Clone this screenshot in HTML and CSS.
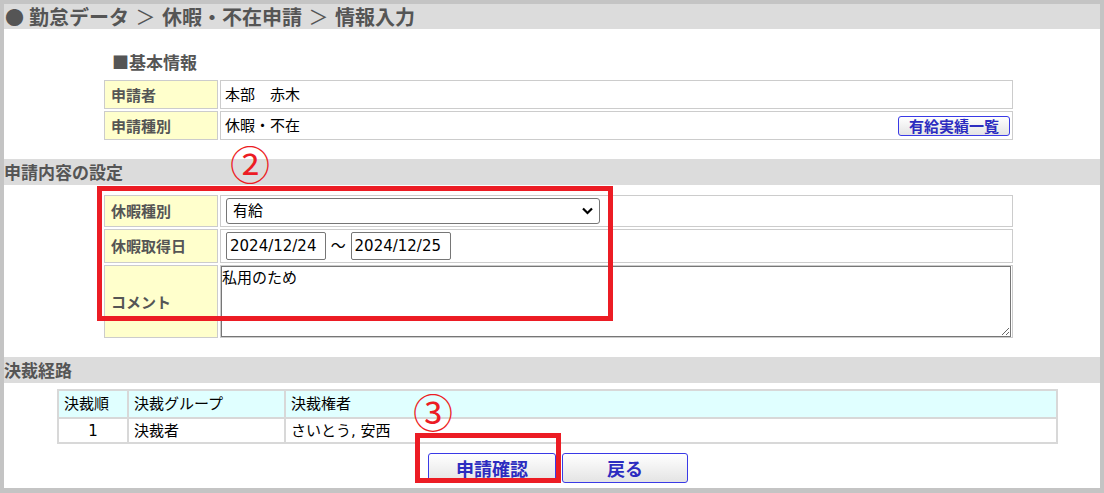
FILE: index.html
```html
<!DOCTYPE html>
<html lang="ja">
<head>
    <meta charset="UTF-8">
    <title>休暇・不在申請 情報入力</title>
    <link rel="stylesheet" href="styles.css">
</head>
<body>
<div class="frame">
    <div class="page-title"><span class="bullet">●</span>勤怠データ<span class="sep">＞</span>休暇・不在申請<span class="sep">＞</span>情報入力</div>

    <div class="sub-title">■基本情報</div>
    <table class="form-table">
        <tr class="row-basic">
            <td class="label">申請者</td>
            <td class="value">本部　赤木</td>
        </tr>
        <tr class="row-basic">
            <td class="label">申請種別</td>
            <td class="value">
                <div class="value-line">
                    <span>休暇・不在</span>
                    <button class="btn btn-small">有給実績一覧</button>
                </div>
            </td>
        </tr>
    </table>

    <div class="section-bar">申請内容の設定</div>
    <table class="form-table">
        <tr class="row-select">
            <td class="label">休暇種別</td>
            <td class="value value-input">
                <span class="select-wrap">
                    <select class="select">
                        <option>有給</option>
                        <option>特別休暇</option>
                        <option>欠勤</option>
                    </select>
                    <svg class="select-arrow" width="11" height="8" viewBox="0 0 11 8"><polyline points="1,1.5 5.5,6 10,1.5" fill="none" stroke="#000" stroke-width="2.2"/></svg>
                </span>
            </td>
        </tr>
        <tr class="row-date">
            <td class="label">休暇取得日</td>
            <td class="value value-input">
                <input class="date" type="text" value="2024/12/24"> ～ <input class="date" type="text" value="2024/12/25">
            </td>
        </tr>
        <tr class="row-comment">
            <td class="label">コメント</td>
            <td class="value value-area"><textarea class="comment">私用のため</textarea></td>
        </tr>
    </table>

    <div class="section-bar">決裁経路</div>
    <table class="route-table">
        <tr class="route-head">
            <td class="col-order">決裁順</td>
            <td class="col-group">決裁グループ</td>
            <td>決裁権者</td>
        </tr>
        <tr class="route-row">
            <td class="col-order center">1</td>
            <td>決裁者</td>
            <td>さいとう, 安西</td>
        </tr>
    </table>

    <div class="actions">
        <button class="btn btn-large">申請確認</button>
        <button class="btn btn-large btn-back">戻る</button>
    </div>

    <!-- annotations -->
    <span class="mark mark-2">②</span>
    <div class="callout callout-form"></div>
    <span class="mark mark-3">③</span>
    <div class="callout callout-submit"></div>
</div>
</body>
</html>
```

FILE: styles.css
```css
html, body {
    margin: 0;
    padding: 0;
}
body {
    background: #c4c4c4;
    font-family: "DejaVu Sans", "Noto Sans CJK JP", sans-serif;
    font-size: 15px;
    color: #000;
}
.frame {
    position: relative;
    margin: 4px 4px 0 4px;
    width: 1096px;
    height: 484px;
    background: #fff;
}
.page-title {
    height: 25px;
    line-height: 25px;
    padding-left: 1px;
    background: #dcdcdc;
    font-family: "Noto Sans CJK JP", sans-serif;
    font-size: 20px;
    font-weight: bold;
    color: #555;
    white-space: nowrap;
}
.page-title .bullet {
    display: inline-block;
    width: 24px;
    font-size: 19px;
}
.page-title .sep {
    display: inline-block;
    width: 33px;
    text-align: center;
    font-weight: normal;
}
.sub-title {
    margin: 21px 0 4px 108px;
    line-height: 24px;
    font-family: "Noto Sans CJK JP", sans-serif;
    font-size: 17px;
    font-weight: bold;
    color: #555;
}
.form-table {
    border-collapse: separate;
    border-spacing: 2px;
    margin-left: 98px;
    width: 913px;
}
.form-table td {
    border: 1px solid #ccc;
    padding: 0;
    line-height: 20px;
}
.form-table .label {
    width: 106px;
    padding-left: 6px;
    background: #ffffcc;
    color: #555;
    font-family: "Noto Sans CJK JP", sans-serif;
    font-weight: bold;
}
.form-table .value {
    padding: 0 2px 0 4px;
}
.row-basic {
    height: 29px;
}
.row-select {
    height: 32px;
}
.row-date {
    height: 34px;
}
.row-comment {
    height: 73px;
}
.value-line {
    display: flex;
    justify-content: space-between;
    align-items: center;
}
.form-table .value-input {
    padding-left: 5px;
}
.form-table .value-area {
    padding: 0;
}
.select-wrap {
    position: relative;
    display: inline-block;
    vertical-align: middle;
}
.select {
    -webkit-appearance: none;
    appearance: none;
    width: 374px;
    height: 26px;
    padding: 0 0 0 6px;
    border: 1px solid #767676;
    border-radius: 3px;
    background: #fff;
    font-family: "DejaVu Sans", "Noto Sans CJK JP", sans-serif;
    font-size: 15px;
    color: #000;
    display: block;
}
.select-arrow {
    position: absolute;
    right: 7px;
    top: 9px;
}
.date {
    box-sizing: border-box;
    width: 100px;
    height: 28px;
    padding: 0 3px;
    border: 1px solid #767676;
    border-radius: 2px;
    font-family: "DejaVu Sans", "Noto Sans CJK JP", sans-serif;
    font-size: 15px;
    color: #000;
    vertical-align: middle;
}
.comment {
    display: block;
    box-sizing: border-box;
    width: 790px;
    height: 71px;
    margin: 0;
    padding: 1px 0;
    border: 1px solid #767676;
    font-family: "DejaVu Sans", "Noto Sans CJK JP", sans-serif;
    font-size: 15px;
    line-height: 20px;
    color: #000;
}
.section-bar {
    margin-top: 17px;
    height: 26px;
    line-height: 26px;
    background: #dcdcdc;
    font-family: "Noto Sans CJK JP", sans-serif;
    font-size: 17px;
    font-weight: bold;
    color: #555;
}
.section-bar + .form-table {
    margin-top: 8px;
}
.route-table {
    border-collapse: collapse;
    table-layout: fixed;
    margin: 6px 0 0 53px;
    width: 1001px;
    border: 2px solid #d8d8d8;
}
.route-table td {
    border: 2px solid #d8d8d8;
    padding: 0 5px;
    line-height: 20px;
}
.route-table .col-order {
    width: 58px;
}
.route-table .col-group {
    width: 145px;
}
.route-table .center {
    text-align: center;
}
.route-head {
    height: 28px;
    background: #e0ffff;
}
.route-row {
    height: 25px;
}
.actions {
    margin-top: 9px;
    padding-left: 424px;
    display: flex;
    gap: 6px;
}
.btn {
    border: 1px solid #3a3ae6;
    border-radius: 3px;
    background: linear-gradient(#ffffff, #e4e4e4);
    color: #2c2cc0;
    font-family: "Noto Sans CJK JP", sans-serif;
    font-weight: bold;
    padding: 0;
    cursor: pointer;
}
.btn-small {
    width: 112px;
    height: 20px;
    font-size: 15px;
    line-height: 18px;
}
.btn-large {
    width: 128px;
    height: 30px;
    font-size: 18px;
    line-height: 28px;
}
.btn-back {
    width: 126px;
}
.mark {
    position: absolute;
    font-family: "Noto Sans CJK JP", sans-serif;
    font-size: 40px;
    line-height: 40px;
    color: #ec1c24;
}
.mark-2 {
    left: 226px;
    top: 139px;
}
.mark-3 {
    left: 409px;
    top: 387px;
}
.callout {
    position: absolute;
    box-sizing: border-box;
    border: 5px solid #ec1c24;
}
.callout-form {
    left: 93px;
    top: 182px;
    width: 516px;
    height: 135px;
}
.callout-submit {
    left: 411px;
    top: 429px;
    width: 146px;
    height: 50px;
}
```
